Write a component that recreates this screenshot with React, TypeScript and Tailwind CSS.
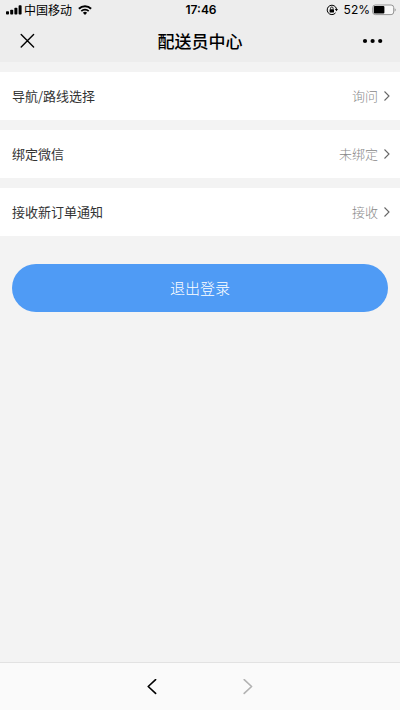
import React from "react";

interface SettingItem {
  label: string;
  value: string;
}

const settings: SettingItem[] = [
  { label: "导航/路线选择", value: "询问" },
  { label: "绑定微信", value: "未绑定" },
  { label: "接收新订单通知", value: "接收" },
];

const StatusBar: React.FC = () => (
  <div className="flex h-5 items-center pr-1 pl-1.5 text-xs leading-5 text-black">
    <div className="flex flex-1 items-center">
      <svg className="mr-0.5 h-2.5 w-4" viewBox="0 0 16 10" fill="currentColor" aria-hidden="true">
        <rect x="0" y="6.3" width="3" height="3.2" rx="0.8" />
        <rect x="4.2" y="4.8" width="3" height="4.7" rx="0.8" />
        <rect x="8.4" y="2.8" width="3" height="6.7" rx="0.8" />
        <rect x="12.6" y="0.3" width="3" height="9.2" rx="0.8" />
      </svg>
      <span>中国移动</span>
      <svg className="ml-1.5 h-2.5 w-3.5" viewBox="0 0 14 10" fill="none" stroke="currentColor" aria-hidden="true">
        <path d="M0.9 3.8a8.6 8.6 0 0 1 12.2 0" strokeWidth="2" />
        <path d="M3.3 6.2a5.2 5.2 0 0 1 7.4 0" strokeWidth="1.7" />
        <path d="M7 9.9L4.9 7.8a3 3 0 0 1 4.2 0z" fill="currentColor" stroke="none" />
      </svg>
    </div>
    <span className="font-[Inter] font-semibold">17:46</span>
    <div className="flex flex-1 items-center justify-end">
      <svg className="mr-1.5 h-3 w-3" viewBox="0 0 12 12" fill="none" stroke="currentColor" aria-hidden="true">
        <path d="M9.6 8.8a4.7 4.7 0 1 1 0.9-3.8" strokeWidth="1" />
        <path d="M8.8 5h3.2l-1.5 2.2z" fill="currentColor" stroke="none" />
        <rect x="3.6" y="5.3" width="4.4" height="3.1" rx="0.4" fill="currentColor" stroke="none" />
        <path d="M4.5 5.4V4.3a1.3 1.3 0 0 1 2.6 0v1.1" strokeWidth="0.8" />
      </svg>
      <span className="font-[Inter]">52%</span>
      <svg className="ml-0.5 h-3 w-6" viewBox="0 0 24 12" aria-hidden="true">
        <rect x="0.7" y="1" width="21" height="9.6" rx="2.6" fill="#f8f8f8" stroke="#8a8a8a" strokeWidth="0.9" />
        <rect x="1.8" y="2.1" width="10.6" height="7.4" rx="1" fill="#000" />
        <path d="M22.7 4.2c1.3 0.5 1.3 2.7 0 3.2z" fill="#8a8a8a" />
      </svg>
    </div>
  </div>
);

const TitleBar: React.FC = () => (
  <div className="flex h-[42px] items-center px-4">
    <button type="button" aria-label="关闭" className="flex w-6 items-center pl-1 text-black">
      <svg className="h-4 w-4" viewBox="0 0 16 16" fill="none" stroke="currentColor" strokeWidth="1.4" strokeLinecap="round">
        <path d="M1.2 1.6l12.4 12.4M13.6 1.6L1.2 14" />
      </svg>
    </button>
    <h1 className="flex-1 text-center text-[17px] leading-6 font-medium text-black">配送员中心</h1>
    <button type="button" aria-label="更多" className="flex w-6 items-center justify-end text-black">
      <svg className="h-1.5 w-6" viewBox="0 0 24 6" fill="currentColor">
        <circle cx="5" cy="3" r="2.1" />
        <circle cx="12.6" cy="3" r="2.1" />
        <circle cx="20.2" cy="3" r="2.1" />
      </svg>
    </button>
  </div>
);

const SettingRow: React.FC<SettingItem> = ({ label, value }) => (
  <button type="button" className="flex h-12 w-full items-center justify-between bg-white pr-2.5 pl-3 text-[13px] leading-5">
    <span className="text-[#333333]">{label}</span>
    <span className="flex items-center gap-1.5 font-light text-[#888888]">
      {value}
      <svg className="h-2.5 w-1.5" viewBox="0 0 6 10" fill="none" stroke="#666666" strokeWidth="1.1">
        <path d="M0.5 0.5L5 5 0.5 9.5" />
      </svg>
    </span>
  </button>
);

const App: React.FC = () => {
  return (
    <div className="flex min-h-screen flex-col bg-[#f3f3f3] font-['Noto_Sans_CJK_SC',sans-serif]">
      <header className="bg-[#ededed]">
        <StatusBar />
        <TitleBar />
      </header>

      <main className="flex-1 pt-2.5">
        <div className="flex flex-col gap-2.5">
          {settings.map((item) => (
            <SettingRow key={item.label} label={item.label} value={item.value} />
          ))}
        </div>
        <div className="px-3 pt-7">
          <button type="button" className="h-12 w-full rounded-full bg-[#4f9bf5] text-[15px] leading-6 font-light text-white">
            退出登录
          </button>
        </div>
      </main>

      <footer className="flex h-12 items-center justify-center gap-20 border-t border-[#e2e2e2] bg-[#fafafa]">
        <button type="button" aria-label="后退" className="flex w-4 justify-center text-black">
          <svg className="h-4 w-2.5" viewBox="0 0 10 16" fill="none" stroke="currentColor" strokeWidth="1.6" strokeLinecap="round" strokeLinejoin="round">
            <path d="M8.6 0.6L1.2 7.5l7.4 6.9" />
          </svg>
        </button>
        <button type="button" aria-label="前进" disabled className="flex w-4 justify-center text-[#b2b2b2]">
          <svg className="h-4 w-2.5" viewBox="0 0 10 16" fill="none" stroke="currentColor" strokeWidth="1.6" strokeLinecap="round" strokeLinejoin="round">
            <path d="M1.2 0.6L8.6 7.5l-7.4 6.9" />
          </svg>
        </button>
      </footer>
    </div>
  );
};

export default App;
